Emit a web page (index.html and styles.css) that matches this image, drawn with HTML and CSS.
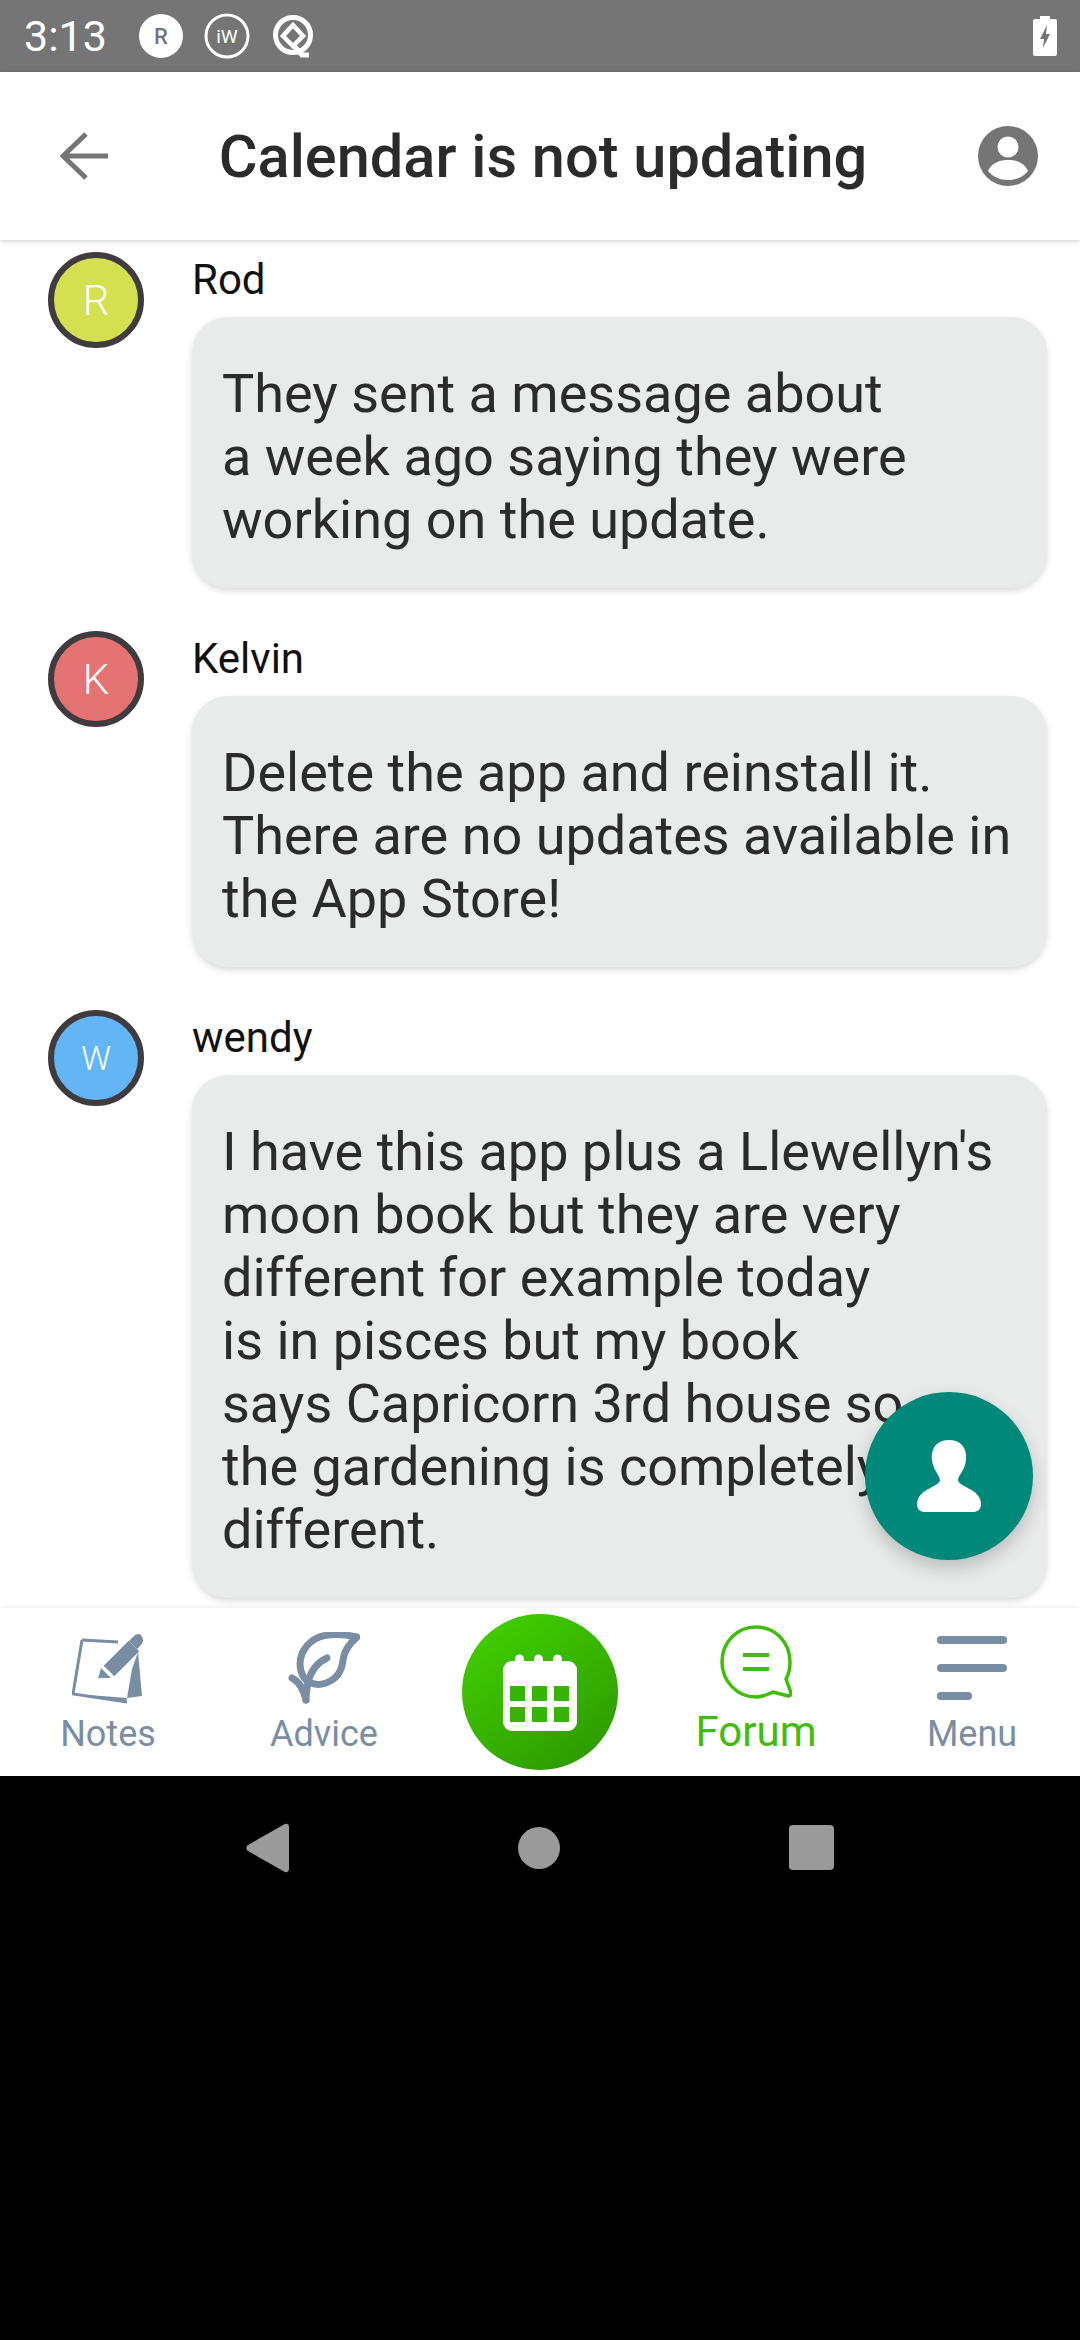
FILE: index.html
```html
<!DOCTYPE html>
<html lang="en">
<head>
<meta charset="utf-8">
<title>Calendar is not updating</title>
<link rel="stylesheet" href="styles.css">
</head>
<body>
<div class="app">
  <div class="status">
    <span class="time">3:13</span>
    <svg class="si" width="44" height="44" viewBox="0 0 44 44"><circle cx="22" cy="22" r="22" fill="#fff"/><text x="22" y="30" text-anchor="middle" class="si-r">R</text></svg>
    <svg class="si" width="46" height="46" viewBox="0 0 46 46"><circle cx="23" cy="23" r="21" fill="none" stroke="#fff" stroke-width="3"/><text x="23" y="30" text-anchor="middle" class="si-w">iW</text></svg>
    <svg class="si" width="44" height="44" viewBox="0 0 44 44"><circle cx="22" cy="21" r="17.500" fill="none" stroke="#fff" stroke-width="5"/><path d="M22 11 L12 22 L22 32 L32 22 Z" fill="none" stroke="#fff" stroke-width="4.500"/><path d="M24 33 L31 41 L38 41" fill="none" stroke="#fff" stroke-width="5"/></svg>
    <svg class="batt" width="24" height="40" viewBox="0 0 24 40"><path d="M7 0h10v3h5a2 2 0 0 1 2 2v33a2 2 0 0 1-2 2H2a2 2 0 0 1-2-2V5a2 2 0 0 1 2-2h5z" fill="#fff"/><path d="M14 9 L7 23 H11 L10 32 L17 18 H13 Z" fill="#757575"/></svg>
  </div>
  <header class="top">
    <svg class="back" width="48" height="48" viewBox="0 0 48 48"><path d="M48 24H6M26 2 L3 24 L26 46" fill="none" stroke="#757575" stroke-width="5"/></svg>
    <h1 class="title">Calendar is not updating</h1>
    <svg class="prof" width="60" height="60" viewBox="0 0 60 60"><circle cx="30" cy="30" r="30" fill="#757575"/><circle cx="30" cy="21" r="10.500" fill="#fff"/><path d="M10 45 C14 36 23 34 30 34 C37 34 46 36 50 45 C45 51 38 54 30 54 C22 54 15 51 10 45Z" fill="#fff"/></svg>
  </header>
  <main class="list">
    <article class="row">
      <div class="av av-r">R</div>
      <div class="body">
        <div class="name">Rod</div>
        <div class="bubble">They sent a message about<br>a week ago saying they were<br>working on the update.</div>
      </div>
    </article>
    <article class="row">
      <div class="av av-k">K</div>
      <div class="body">
        <div class="name">Kelvin</div>
        <div class="bubble">Delete the app and reinstall it.<br>There are no updates available in<br>the App Store!</div>
      </div>
    </article>
    <article class="row">
      <div class="av av-w av-small">W</div>
      <div class="body">
        <div class="name">wendy</div>
        <div class="bubble">I have this app plus a Llewellyn's<br>moon book but they are very<br>different for example today<br>is in pisces but my book<br>says Capricorn 3rd house so<br>the gardening is completely<br>different.</div>
      </div>
    </article>
    <div class="fab">
      <svg width="64" height="72" viewBox="0 0 64 72"><path d="M32 0C47 0 50 12 49 20C48 30 41 36 41 40C41 44 50 47 56 51C62 55 64 60 64 64C64 70 60 72 56 72L8 72C4 72 0 70 0 64C0 60 2 55 8 51C14 47 23 44 23 40C23 36 16 30 15 20C14 12 17 0 32 0Z" fill="#fff"/></svg>
    </div>
  </main>
  <nav class="tabs">
    <div class="tab">
      <svg class="ic" width="72" height="72" viewBox="0 0 72 72"><path d="M10 8 L1 62 L55 70" fill="none" stroke="#7a8ea3" stroke-width="3"/><path d="M10 8 L46 10" fill="none" stroke="#7a8ea3" stroke-width="3"/><path d="M66 20 L70 64 L55 66 L60 37Z" fill="#7a8ea3"/><path d="M15 64 L54 70 L55 66 L17 63Z" fill="#7a8ea3"/><path d="M37 39 L62 14" fill="none" stroke="#7a8ea3" stroke-width="15"/><path d="M57 9 L61 5 C64 1 69 1 70 5 C72 8 71 11 68 14 L65 17Z" fill="#7a8ea3"/><path d="M29 36 L39 46 L27 46 L26 47Z" fill="#7a8ea3"/></svg>
      <span class="lbl">Notes</span>
    </div>
    <div class="tab">
      <svg class="ic" width="72" height="72" viewBox="0 0 72 72"><g fill="none" stroke="#7a8ea3" stroke-width="7" stroke-linecap="round" stroke-linejoin="round"><path d="M69 5C55 2 38 1 27 7C14 15 10 28 13 39C16 50 26 55 38 51C49 47 54 39 55 28C56 18 62 11 69 5Z"/><path d="M39 26C30 30 23 39 20 50C19 56 18 63 18 68"/><path d="M4 46C10 49 15 55 18 68"/></g></svg>
      <span class="lbl">Advice</span>
    </div>
    <div class="tab tab-mid">
      <div class="cal">
        <svg width="74" height="78" viewBox="0 0 74 78"><path d="M12 6a4.500 4.500 0 0 1 9 0v2h10V6a4.500 4.500 0 0 1 9 0v2h10V6a4.500 4.500 0 0 1 9 0v2h6a9 9 0 0 1 9 9v52a9 9 0 0 1-9 9H9a9 9 0 0 1-9-9V17a9 9 0 0 1 9-9h3z" fill="#fff"/><g fill="#38b406"><rect x="7" y="33" width="15" height="15"/><rect x="29" y="33" width="15" height="15"/><rect x="51" y="33" width="15" height="15"/><rect x="7" y="54" width="15" height="15"/><rect x="29" y="54" width="15" height="15"/><rect x="51" y="54" width="15" height="15"/></g></svg>
      </div>
    </div>
    <div class="tab tab-on">
      <svg class="ic" width="72" height="74" viewBox="0 0 72 74"><path d="M36 2C17 2 2 17 2 37C2 56 17 72 36 72C42 72 47 70 53 67L68 71C70 71 71 70 71 68L66 54C69 49 70 43 70 37C70 17 55 2 36 2Z" fill="none" stroke="#3fbd0a" stroke-width="3.500" stroke-linejoin="round"/><path d="M23 30H49M23 44H49" fill="none" stroke="#3fbd0a" stroke-width="4"/></svg>
      <span class="lbl lbl-on">Forum</span>
    </div>
    <div class="tab">
      <div class="burger"><i></i><i></i><i class="short"></i></div>
      <span class="lbl">Menu</span>
    </div>
  </nav>
  <div class="sys">
    <svg width="43" height="50" viewBox="0 0 43 50"><path d="M38 1.500C40 0 43 1 43 4V46C43 49 40 50 38 48.500L2 28C0 27 0 23 2 22Z" fill="#9a9a9a"/></svg>
    <div class="dot"></div>
    <div class="sq"></div>
  </div>
</div>
</body>
</html>
```
FILE: styles.css
```css
* { box-sizing: border-box; }
html, body { margin: 0; padding: 0; }
body { width: 1080px; height: 2340px; background: #000; font-family: Roboto, "Liberation Sans", sans-serif; overflow: hidden; }
.app { width: 1080px; height: 2340px; display: flex; flex-direction: column; }

.status { height: 72px; flex: none; background: #757575; display: flex; align-items: center; padding: 0 23px 0 24px; color: #fff; }
.time { font-size: 43px; width: 115px; }
.si { margin-right: 21px; flex: none; }
.si-r { font: 500 22px Roboto, sans-serif; fill: #757575; }
.si-w { font: 400 19px Roboto, sans-serif; fill: #fff; }
.batt { margin-left: auto; }

.top { height: 168px; flex: none; background: #fff; display: flex; align-items: center; position: relative; z-index: 2; box-shadow: 0 1px 5px rgba(0,0,0,.2); padding: 0 42px 0 60px; }
.back { flex: none; }
.title { flex: 1; margin: 0; text-align: center; font-size: 59.5px; font-weight: 500; color: #2b2b2b; padding: 2px 0 0 0; }
.prof { flex: none; }

.list { height: 1368px; flex: none; background: #fff; overflow: hidden; position: relative; padding-top: 12px; }
.row { display: flex; padding-left: 48px; margin-bottom: 43px; }
.av { width: 96px; height: 96px; flex: none; border-radius: 50%; border: 6px solid #3f3b3e; color: #fff; font-size: 42px; font-weight: 300; display: flex; align-items: center; justify-content: center; }
.av-r { background: #d3e04f; }
.av-k { background: #e57373; }
.av-w { background: #64b5f6; }
.av-small { font-size: 33px; }
.body { margin-left: 48px; width: 855px; }
.name { font-size: 42px; line-height: 54px; padding-top: 1px; height: 54px; margin-bottom: 11px; color: #111; }
.bubble { background: #e9ebeb; border-radius: 36px; padding: 45px 30px 37px; font-size: 54px; line-height: 63px; color: #2b2b2b; box-shadow: 0 3px 6px rgba(0,0,0,.15); }
.fab { position: absolute; left: 865px; top: 1152px; width: 168px; height: 168px; border-radius: 50%; background: #00897b; display: flex; align-items: center; justify-content: center; box-shadow: 0 8px 18px rgba(0,0,0,.2); }

.tabs { height: 168px; flex: none; background: #fff; display: grid; grid-template-columns: repeat(5, 216px); position: relative; z-index: 2; box-shadow: 0 -1px 4px rgba(0,0,0,.08); }
.tab { display: flex; flex-direction: column; align-items: center; position: relative; padding-top: 24px; }
.tab-mid { padding-top: 6px; }
.tab-on { padding-top: 17px; }
.ic { flex: none; display: block; }
.lbl { font-size: 36px; line-height: 40px; color: #7a8ea3; margin-top: 10px; }
.lbl-on { font-size: 42px; line-height: 44px; color: #3fbd0a; margin-top: 11px; }
.cal { width: 156px; height: 156px; border-radius: 50%; background: linear-gradient(145deg, #43d400, #2c9400); display: flex; align-items: center; justify-content: center; }
.burger { width: 70px; height: 72px; padding-top: 4px; display: flex; flex-direction: column; gap: 20px; }
.burger i { display: block; height: 8px; border-radius: 4px; background: #7a8ea3; }
.burger .short { width: 35px; }

.sys { flex: 1; background: #000; display: flex; justify-content: center; align-items: flex-start; gap: 229px; padding-top: 47px; }
.sys svg { flex: none; }
.dot { width: 42px; height: 42px; margin-top: 4px; border-radius: 50%; background: #9a9a9a; }
.sq { width: 45px; height: 45px; margin-top: 2px; border-radius: 4px; background: #9a9a9a; }
```
